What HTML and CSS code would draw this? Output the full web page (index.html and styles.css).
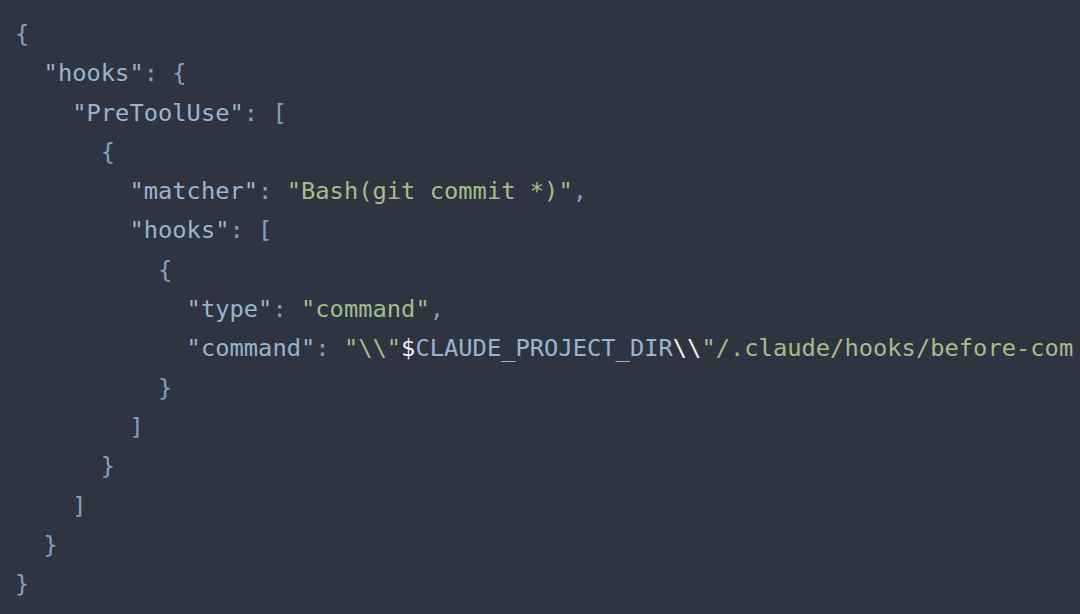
FILE: index.html
```html
<!DOCTYPE html>
<html>
<head>
<meta charset="utf-8">
<link rel="stylesheet" href="styles.css">
</head>
<body>
<pre class="code"><span class="p">{</span>
  <span class="k">"hooks"</span><span class="p">: {</span>
    <span class="k">"PreToolUse"</span><span class="p">: [</span>
      <span class="p">{</span>
        <span class="k">"matcher"</span><span class="p">: </span><span class="s">"Bash(git commit *)"</span><span class="p">,</span>
        <span class="k">"hooks"</span><span class="p">: [</span>
          <span class="p">{</span>
            <span class="k">"type"</span><span class="p">: </span><span class="s">"command"</span><span class="p">,</span>
            <span class="k">"command"</span><span class="p">: </span><span class="s">"\\"</span><span class="e">$</span><span class="k">CLAUDE_PROJECT_DIR</span><span class="e">\\</span><span class="s">"/.claude/hooks/before-com</span>
          <span class="p">}</span>
        <span class="p">]</span>
      <span class="p">}</span>
    <span class="p">]</span>
  <span class="p">}</span>
<span class="p">}</span></pre>
</body>
</html>
```

FILE: styles.css
```css
html, body {
  margin: 0;
  padding: 0;
  background: #2e3440;
  width: 1080px;
  height: 614px;
  overflow: hidden;
}
.code {
  margin: 0;
  padding: 15px 0 0 15px;
  font-family: "DejaVu Sans Mono", "Liberation Mono", monospace;
  font-size: 23.75px;
  line-height: 39.3px;
  white-space: pre;
  color: #81a1c1;
}
.p { color: #81a1c1; }
.k { color: #9ab4cf; }
.s { color: #a3be8c; }
.e { color: #eceff4; }
```
